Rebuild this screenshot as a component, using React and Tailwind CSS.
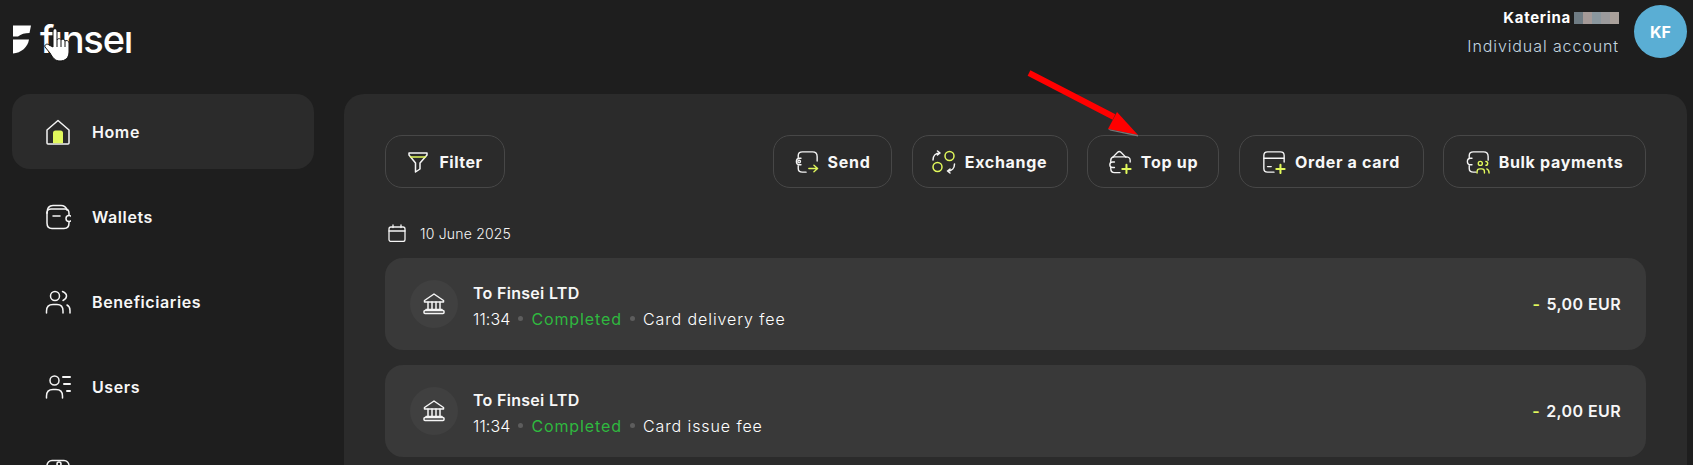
import React from "react";

const W = "#f5f5f5";
const L = "#e2f95c";
const Svg = ({ s = 26, v = 26, sw = 1.5, children }) => (
  <svg width={s} height={s} viewBox={`0 0 ${v} ${v}`} fill="none" stroke={W} strokeWidth={sw} strokeLinecap="round" strokeLinejoin="round" className="shrink-0">
    {children}
  </svg>
);

const HomeIcon = () => (
  <Svg>
    <path d="M2 11 L13 1.5 L24 11 V24 a1 1 0 0 1 -1 1 H3 a1 1 0 0 1 -1 -1 Z" />
    <path d="M8 24.2 V14 a2.5 2.5 0 0 1 2.5 -2.5 H15.5 a2.5 2.5 0 0 1 2.5 2.5 V24.2 Z" fill={L} stroke="none" />
  </Svg>
);
const WalletIcon = () => (
  <Svg>
    <path d="M2 9 C2 4 4 1.5 8 1.5 H16 C19 1.5 21 3 22 6" />
    <path d="M2 9 C2 6.5 4 5 6 5 H20 C22.5 5 24 7 24 9.5 V11" />
    <path d="M2 9 V19 C2 22.5 4 24.5 7 24.5 H19 C22 24.5 24 22.5 24 19 V18" />
    <circle cx="24" cy="14.5" r="3" />
    <path d="M8 12 H15" />
  </Svg>
);
const BenefIcon = () => (
  <Svg>
    <circle cx="10" cy="7" r="4.5" />
    <path d="M1.5 24 V22 C1.5 18 4 15.5 8 15.5 H12 C16 15.5 18 18 18 22 V24" />
    <path d="M17.5 2.5 C20 3.5 21.5 5 21.5 7 C21.5 9 20 10.5 18 11.5" />
    <path d="M22 16 C24 17 25 19 25 21.5 V24" />
  </Svg>
);
const UsersIcon = () => (
  <Svg>
    <circle cx="9.5" cy="6.5" r="4.5" />
    <path d="M1.5 24 V22 C1.5 18 4 15.5 8 15.5 H11 C15 15.5 17.5 18 17.5 22 V24" />
    <path d="M18 3 H25 M19 10 H25 M22 17 H25" strokeWidth="2" />
  </Svg>
);
const CardNavIcon = () => (
  <Svg>
    <rect x="2" y="1.5" width="22" height="23" rx="5" />
    <circle cx="14" cy="5" r="2" />
  </Svg>
);
const FilterIcon = () => (
  <Svg s={22} v={22}>
    <path d="M2 2 H20 L20 4 L13 12 V18 L8.5 21 V12 L2 4 Z" />
    <path d="M3.5 6 H18.5" stroke={L} />
  </Svg>
);
const SendIcon = () => (
  <Svg s={24}>
    <path d="M3.5 8 V6 C3.5 3.5 5.5 2 8 2 H19 C22 2 24 4 24 7 V12" />
    <path d="M3.5 17 V20 C3.5 22.5 5.5 24 8 24 H12" />
    <path d="M6.5 9 H5 a3.5 3.5 0 0 0 0 7 H6.5" />
    <circle cx="4.5" cy="12.5" r="1.4" />
    <path d="M15 20 H24 M20.5 16.5 L24.5 20 L20.5 23.5" stroke={L} />
  </Svg>
);
const ExchangeIcon = () => (
  <Svg s={24} v={24}>
    <circle cx="17.5" cy="6" r="4.5" stroke={L} />
    <circle cx="5.5" cy="17" r="4.5" stroke={L} />
    <path d="M1 10 C1 6 3.5 3 8 3 M5.5 1 L8 3 L5.5 5" />
    <path d="M22.5 14 C22.5 18 20 21 15.5 21 M18 23 L15.5 21 L18 19" />
  </Svg>
);
const TopUpIcon = () => (
  <Svg s={24}>
    <path d="M5 8 L10.5 2.5 C11.5 1.5 13 1.5 14 2.5 L19.5 8" />
    <path d="M6 7.5 H20 C22 7.5 24 9 24 11 V13" />
    <path d="M3 13 V11 C3 9 4 8 6 7.5" />
    <path d="M7 13 H5 a2.5 2.5 0 0 0 0 6 H7" />
    <path d="M3 19 V20 C3 23 5 24.5 7 24.5 H13" />
    <path d="M20 16 V25 M15.5 20.5 H24.5" stroke={L} strokeWidth="2.2" />
  </Svg>
);
const OrderIcon = () => (
  <Svg s={24}>
    <path d="M13 24 H6 C3.5 24 2 22.5 2 20 V6 C2 3.5 3.5 2 6 2 H20 C22.5 2 24 3.5 24 6 V13" />
    <path d="M2 9 H24" />
    <path d="M6 18 H10" />
    <path d="M20 16 V25 M15.5 20.5 H24.5" stroke={L} strokeWidth="2.2" />
  </Svg>
);
const BulkIcon = () => (
  <Svg s={24}>
    <path d="M3.5 8 V6 C3.5 3.5 5.5 2 8 2 H19 C22 2 24 4 24 7 V11" />
    <path d="M3.5 17 V20 C3.5 22.5 5.5 24 8 24 H11" />
    <path d="M6.5 9 H5 a3.5 3.5 0 0 0 0 7 H6.5" />
    <circle cx="15.5" cy="14.5" r="2.2" stroke={L} />
    <path d="M21.5 12.5 a2 2 0 0 1 0 4" stroke={L} />
    <path d="M12 25 V23.5 C12 21.5 13.5 20.5 15 20.5 H17 C19 20.5 20 21.5 20 23.5 V25 M22.5 20.5 C24 21 25 22.5 25 25" stroke={L} />
  </Svg>
);
const CalendarIcon = () => (
  <Svg s={18} v={18} sw={1.3}>
    <rect x="1" y="3" width="16" height="14.5" rx="2" />
    <path d="M1 7 H17 M5 1 V3.5 M13 1 V3.5" />
  </Svg>
);
const BankIcon = () => (
  <Svg s={24} v={24}>
    <path d="M2.5 8.5 L12 2 L21.5 8.5 V10 H2.5 Z" />
    <path d="M6 10 V17.5 M10 10 V17.5 M14 10 V17.5 M18 10 V17.5" />
    <path d="M4 17.5 H20" />
    <rect x="2" y="18.5" width="20" height="3" rx="1" />
  </Svg>
);

const nav = [
  { label: "Home", Icon: HomeIcon, active: true },
  { label: "Wallets", Icon: WalletIcon },
  { label: "Beneficiaries", Icon: BenefIcon },
  { label: "Users", Icon: UsersIcon },
  { Icon: CardNavIcon },
];

const actions = [
  { label: "Send", Icon: SendIcon, w: "w-[119px]" },
  { label: "Exchange", Icon: ExchangeIcon, w: "w-[156px]" },
  { label: "Top up", Icon: TopUpIcon, w: "w-[132px]" },
  { label: "Order a card", Icon: OrderIcon, w: "w-[185px]" },
  { label: "Bulk payments", Icon: BulkIcon, w: "w-[203px]" },
];

const rows = [
  { note: "Card delivery fee", amount: "5,00 EUR" },
  { note: "Card issue fee", amount: "2,00 EUR" },
];

const blur = ["#6f7c84", "#a59a98", "#8a979e", "#9b9a9c", "#a9a09a"];

function ActionButton({ label, Icon, w }) {
  return (
    <button className={`${w} h-[53px] flex items-center justify-center gap-[9px] rounded-[17px] border border-[#474747] text-[16px] font-bold text-[#f7f7f7] tracking-[0.7px]`}>
      <Icon />
      <span>{label}</span>
    </button>
  );
}

function Row({ note, amount }) {
  return (
    <div className="h-[92px] shrink-0 flex items-center rounded-[18px] bg-[#393939] pl-[25px] pr-[25px]">
      <div className="w-[48px] h-[48px] rounded-full bg-[#404040] flex items-center justify-center shrink-0">
        <BankIcon />
      </div>
      <div className="ml-[15px] flex flex-col gap-[7px] pt-[4px]">
        <div className="text-[16px] leading-[18px] font-semibold tracking-[0.3px] text-[#f7f7f7]">To Finsei LTD</div>
        <div className="flex items-center text-[16px] leading-[20px] font-light tracking-[0.9px] text-white">
          <span className="tracking-[0.1px]">11:34</span>
          <span className="w-[5px] h-[5px] rounded-full bg-[#5d5d5d] mx-[8px]" />
          <span className="text-[#2fb83f] font-normal">Completed</span>
          <span className="w-[5px] h-[5px] rounded-full bg-[#5d5d5d] mx-[8px]" />
          <span>{note}</span>
        </div>
      </div>
      <div className="ml-auto flex items-center gap-[6px] text-[16px] font-semibold tracking-[0.4px] text-[#f7f7f7]">
        <span className="text-[#e2f95c]">-</span>
        <span>{amount}</span>
      </div>
    </div>
  );
}

export default function App() {
  return (
    <div className="relative h-[465px] overflow-hidden bg-[#1e1e1e] text-white font-['Inter','Liberation_Sans',sans-serif]">
      <header className="h-[94px] flex items-start justify-between pl-[13px] pr-[6px]">
        <div className="relative flex items-center gap-[9px] mt-[22px]">
          <svg width="18" height="29" viewBox="0 0 18 29" className="shrink-0 mt-[1px]">
            <path d="M0 0.5 H18 L16.5 8 C12 8 8 9 5 11.5 H0 Z" fill="#fff" />
            <path d="M0 14.5 H16 C15 22 8 28 0 28.5 Z" fill="#fff" />
          </svg>
          <span className="text-[38px] leading-[34px] font-medium tracking-[-1.2px] text-white">fınseı</span>
        </div>
        <div className="flex items-start gap-[15px] mt-[5px]">
          <div className="flex flex-col items-end pt-[3px]">
            <div className="flex items-center h-[20px] text-[15px] font-bold tracking-[0.7px]">
              <span>Katerina</span>
              <span className="flex ml-[3px]">
                {blur.map((c, i) => (
                  <span key={i} className="w-[9px] h-[12px]" style={{ background: c }} />
                ))}
              </span>
            </div>
            <div className="mt-[7px] text-[16px] leading-[22px] font-light tracking-[0.9px] text-[#c4d6e0]">Individual account</div>
          </div>
          <div className="w-[53px] h-[53px] rounded-full bg-[#5aaed4] flex items-center justify-center text-[16px] font-bold text-white">KF</div>
        </div>
      </header>

      <div className="flex pl-[12px] pr-[6px]">
        <nav className="w-[302px] shrink-0 flex flex-col gap-[10px]">
          {nav.map(({ label, Icon, active }, i) => (
            <div key={i} className={`h-[75px] shrink-0 flex items-center gap-[21px] pl-[33px] rounded-[18px] ${active ? "bg-[#2b2b2b]" : ""}`}>
              <Icon />
              {label && <span className="text-[16px] font-semibold tracking-[0.6px] text-[#f7f7f7]">{label}</span>}
            </div>
          ))}
        </nav>
        <main className="ml-[30px] flex-1 h-[500px] rounded-t-[20px] bg-[#2b2b2b] px-[41px] pt-[41px]">
          <div className="flex justify-between">
            <button className="w-[120px] h-[53px] flex items-center justify-center gap-[10px] rounded-[17px] border border-[#474747] text-[16px] font-bold tracking-[0.5px] text-[#f7f7f7]">
              <FilterIcon />
              <span>Filter</span>
            </button>
            <div className="flex gap-[19.5px]">
              {actions.map((a) => (
                <ActionButton key={a.label} {...a} />
              ))}
            </div>
          </div>
          <div className="mt-[34px] h-[22px] flex items-center gap-[14px] pl-[3px] text-[14px] font-light tracking-[0.2px] text-[#f7f7f7]">
            <CalendarIcon />
            <span>10 June 2025</span>
          </div>
          <div className="mt-[14px] flex flex-col gap-[15px]">
            {rows.map((r) => (
              <Row key={r.note} {...r} />
            ))}
          </div>
        </main>
      </div>

      {/* mouse pointer captured over the logo */}
      <svg width="30" height="36" viewBox="0 0 30 36" className="absolute left-[44px] top-[26px]">
        <path d="M9 21 V5 C9 2 13 2 13 5 V14 C14 12 16.5 12.5 17 14 C18 12.5 20.5 13 21 15 C22 14 25 14.5 25 17 V26 C25 32 21 35 16 35 C11 35 9 32 6 27 L1 21 C0 19 3 17 5 19 Z" fill="#fff" stroke="#111" strokeWidth="1" />
        <path d="M13 14 V21 M17 14 V21 M21 15 V21" stroke="#111" strokeWidth="1" />
      </svg>

      {/* red annotation arrow */}
      <svg width="125" height="75" viewBox="0 0 125 75" className="absolute left-[1024px] top-[66px]">
        <path d="M5 7 L90 51" stroke="#ff0000" strokeWidth="6" />
        <path d="M114 69 L93 46 L84 63 Z" fill="#ff0000" />
        <path d="M114 69 L84 63 L86 64.5 L114 70.5 Z" fill="#777" />
      </svg>
    </div>
  );
}
